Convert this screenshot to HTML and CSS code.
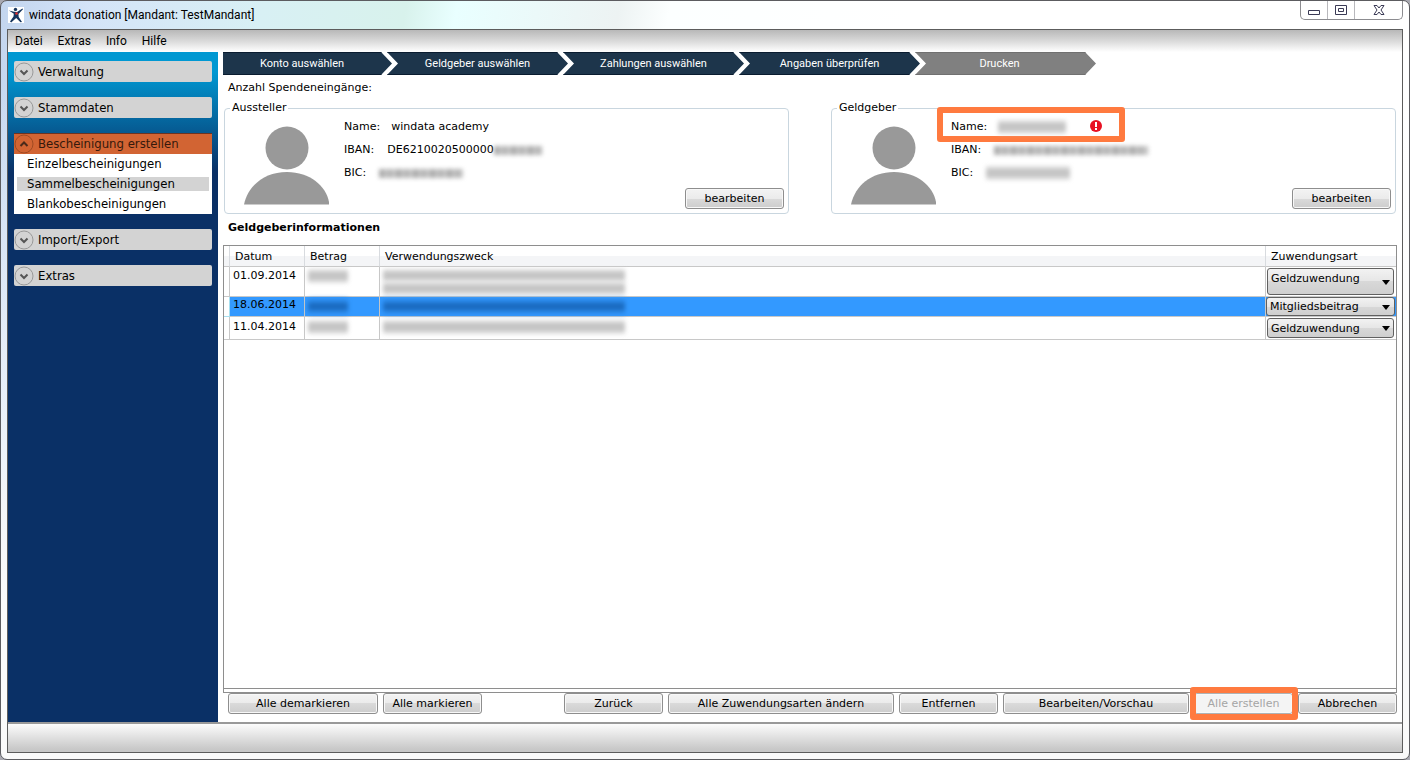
FILE: index.html
```html
<!DOCTYPE html>
<html lang="de">
<head>
<meta charset="utf-8">
<title>windata donation</title>
<link rel="stylesheet" href="styles.css">
</head>
<body>
<svg class="defs" aria-hidden="true">
  <symbol id="down" viewBox="0 0 20 20"><circle cx="10" cy="10" r="9" fill="none" stroke="#999"/><path d="M6.500 8.500 10 12l3.500-3.500" fill="none" stroke="#555" stroke-width="2"/></symbol>
  <symbol id="up" viewBox="0 0 20 20"><circle cx="10" cy="10" r="9" fill="none" stroke="#a04a22"/><path d="M6.500 12 10 8.500l3.500 3.500" fill="none" stroke="#4a2a1a" stroke-width="2"/></symbol>
  <symbol id="person" viewBox="0 0 86 79"><circle cx="43" cy="22" r="21.500" fill="#999"/><path d="M0 78.500C4 60 20 46 43 46s39 14 42 30v2.500z" fill="#999"/></symbol>
</svg>
<div class="window">
  <header class="titlebar">
    <svg class="logo" viewBox="0 0 16 16" aria-hidden="true"><path fill="#fff" d="M0 0h16v16H0z"/><circle cx="7.500" cy="2.400" r="1.700" fill="#16365f"/><path fill="#16365f" d="M1 3.500 6 4.700 9 5l5.500-3.500.5.800-4.500 4.700.2 3 3.300 5-1.500.3L8.200 11l-5 4.500L2 14.600l3.500-5.200.3-2.700z"/><circle cx="8.500" cy="6.500" r="1.300" fill="#e03030"/></svg>
    <h1>windata donation [Mandant: TestMandant]</h1>
    <div class="controls">
      <button aria-label="Minimieren"><svg viewBox="0 0 14 12"><path d="M1.500 6.500h11v4h-11z" fill="#fff" stroke="#3a3a55"/></svg></button>
      <button aria-label="Maximieren"><svg viewBox="0 0 14 12"><path d="M1.500 1.500h11v9h-11zM4.500 4.500h5v3h-5z" fill="#fff" stroke="#3a3a55"/></svg></button>
      <button class="close" aria-label="Schließen"><svg viewBox="0 0 14 12"><path d="M2 1.500h3L7 4l2-2.500h3L9 6l3 4.500H9L7 8l-2 2.500H2L5 6z" fill="#fff" stroke="#3a3a55"/></svg></button>
    </div>
  </header>
  <div class="client">
    <nav class="menu"><button>Datei</button><button>Extras</button><button>Info</button><button>Hilfe</button></nav>
    <div class="workspace">
      <nav class="sidebar">
        <button class="group"><svg><use href="#down"/></svg>Verwaltung</button>
        <button class="group"><svg><use href="#down"/></svg>Stammdaten</button>
        <section class="open">
          <button class="group active"><svg><use href="#up"/></svg>Bescheinigung erstellen</button>
          <ul>
            <li><a href="#einzel">Einzelbescheinigungen</a></li>
            <li><a href="#sammel" class="current">Sammelbescheinigungen</a></li>
            <li><a href="#blanko">Blankobescheinigungen</a></li>
          </ul>
        </section>
        <button class="group"><svg><use href="#down"/></svg>Import/Export</button>
        <button class="group"><svg><use href="#down"/></svg>Extras</button>
      </nav>
      <main>
        <ol class="steps">
          <li>Konto auswählen</li><li>Geldgeber auswählen</li><li>Zahlungen auswählen</li><li>Angaben überprüfen</li><li>Drucken</li>
        </ol>
        <p class="count">Anzahl Spendeneingänge:</p>
        <div class="parties">
          <fieldset>
            <legend>Aussteller</legend>
            <div class="party">
              <svg class="avatar" aria-hidden="true"><use href="#person"/></svg>
              <dl>
                <div><dt>Name:</dt><dd class="name">windata academy</dd></div>
                <div><dt>IBAN:</dt><dd>DE6210020500000<span class="blur w48"></span></dd></div>
                <div><dt>BIC:</dt><dd><span class="blur w84"></span></dd></div>
              </dl>
              <button class="btn">bearbeiten</button>
            </div>
          </fieldset>
          <fieldset>
            <legend>Geldgeber</legend>
            <div class="party">
              <svg class="avatar" aria-hidden="true"><use href="#person"/></svg>
              <dl>
                <div class="invalid"><dt>Name:</dt><dd class="name"><span class="blur tall w68"></span></dd><dd class="error"><svg viewBox="0 0 12 12" role="img" aria-label="Fehler"><circle cx="6" cy="6" r="6" fill="#e81123"/><path d="M5 2h2v5H5zM5 8h2v2H5z" fill="#fff"/></svg></dd></div>
                <div><dt>IBAN:</dt><dd><span class="blur w154"></span></dd></div>
                <div><dt>BIC:</dt><dd><span class="blur tall w84"></span></dd></div>
              </dl>
              <button class="btn">bearbeiten</button>
            </div>
          </fieldset>
        </div>
        <h2>Geldgeberinformationen</h2>
        <div class="grid">
          <table>
            <colgroup><col class="c-mark"><col class="c-date"><col class="c-date"><col><col class="c-kind"></colgroup>
            <thead><tr><th></th><th>Datum</th><th>Betrag</th><th>Verwendungszweck</th><th>Zuwendungsart</th></tr></thead>
            <tbody>
              <tr class="double"><td></td><td>01.09.2014</td><td><span class="blur tall w40"></span></td><td><span class="blur tall w240"></span><span class="blur tall w240"></span></td><td><select aria-label="Zuwendungsart 01.09.2014"><option>Geldzuwendung</option></select></td></tr>
              <tr class="selected"><td></td><td>18.06.2014</td><td><span class="blur tall w40"></span></td><td><span class="blur tall w240"></span></td><td><select aria-label="Zuwendungsart 18.06.2014"><option>Mitgliedsbeitrag</option></select></td></tr>
              <tr><td></td><td>11.04.2014</td><td><span class="blur tall w40"></span></td><td><span class="blur tall w240"></span></td><td><select aria-label="Zuwendungsart 11.04.2014"><option>Geldzuwendung</option></select></td></tr>
            </tbody>
          </table>
        </div>
        <div class="actions">
          <button class="btn wide">Alle demarkieren</button>
          <button class="btn">Alle markieren</button>
          <span class="spacer"></span>
          <button class="btn">Zurück</button>
          <button class="btn widest">Alle Zuwendungsarten ändern</button>
          <button class="btn">Entfernen</button>
          <button class="btn wider">Bearbeiten/Vorschau</button>
          <span class="marked"><button class="btn" disabled>Alle erstellen</button></span>
          <button class="btn">Abbrechen</button>
        </div>
      </main>
    </div>
    <footer></footer>
  </div>
</div>
</body>
</html>
```
FILE: styles.css
```css
*, ::before, ::after { box-sizing: border-box; }
body { margin: 0; background: #a8a8b0; font: 11px/14px "DejaVu Sans", Verdana, sans-serif; color: #000; }
button, select { font: inherit; color: inherit; margin: 0; }
h1, h2, p, ol, ul, dl, dd { margin: 0; padding: 0; }
ol, ul { list-style: none; }
.defs { position: absolute; width: 0; height: 0; }

.window {
  display: flex; flex-direction: column; min-height: 100vh; padding: 0 6px 6px;
  border: 1px solid #5c5c60; border-radius: 7px;
  background: linear-gradient(transparent 80px, #fafafa 600px), linear-gradient(100deg, #c3d5ee 0, #d4e4f8 90px, #d8f0f4 260px, #d8f2ec 400px, #e9ffff 450px, #edf3f3 610px, #fcffff 660px, #fff 900px);
}
.titlebar { display: flex; align-items: flex-start; height: 28px; padding-left: 1px; }
.logo { width: 16px; height: 16px; margin-top: 6px; }
h1 { flex: 1; padding: 5px 0 0 5px; font: 12px/18px Roboto, "Noto Sans", sans-serif; }
.controls { display: flex; border: 1px solid #8c8c90; border-top: 0; border-radius: 0 0 5px 5px; }
.controls button { display: flex; justify-content: center; align-items: center; width: 27px; height: 18px; padding: 0; border: 0; border-right: 1px solid #b8b8bc; background: none; }
.controls .close { width: 47px; border-right: 0; }
.controls svg { width: 14px; height: 12px; }

.client { flex: 1; display: flex; flex-direction: column; border: 1px solid #5c5c5c; background: #fff; }
.menu { display: flex; gap: 15px; height: 22px; padding-left: 7px; background: linear-gradient(#b8b8b8, #d6d6d6 45%, #fff); }
.menu button { padding: 0; border: 0; background: none; font: 12px/22px Roboto, "Noto Sans", sans-serif; }
.workspace { flex: 1; display: flex; }

.sidebar { flex: none; width: 210px; padding: 9px 6px; display: flex; flex-direction: column; gap: 15px; background: linear-gradient(#0098d2, #0098d2 20px, #0a3066 120px); font: 13px/20px "DejaVu Sans Condensed", Tahoma, "Noto Sans", sans-serif; }
.group { display: flex; align-items: center; gap: 4px; width: 100%; height: 21px; padding: 0; border: 0; border-radius: 2px; background: #d3d3d3; text-align: left; }
.group svg { width: 20px; height: 20px; }
.active { border-top: 1px solid #6b3322; border-radius: 0; background: #d26433; color: #35190c; }
.open ul { padding: 0 3px; background: #fff; }
.open li { height: 20px; padding: 3px 0; }
.open a { display: block; padding-left: 10px; line-height: 14px; color: #000; text-decoration: none; }
.open .current { background: #d3d3d3; }

main { flex: 1; min-width: 0; display: flex; flex-direction: column; padding: 0 5px 8px; }
.steps { display: flex; height: 23px; font: 11px/22px Roboto, "Noto Sans", sans-serif; color: #fff; text-align: center; }
.steps li { width: 181px; margin-left: -5px; background: #1d354b; border-top: 1px solid #0a1c30; border-bottom: 1px solid #0a1c30; clip-path: polygon(0 0, 170px 0, 100% 50%, 170px 100%, 0 100%, 11px 50%); }
.steps li:first-child { width: 169px; margin-left: 0; padding-right: 11px; clip-path: polygon(0 0, 158px 0, 100% 50%, 158px 100%, 0 100%); }
.steps li:last-child { padding-right: 12px; background: #808080; border-color: #707070; }
.count { padding: 5px 5px 4px; line-height: 16px; }

.parties { display: grid; grid-template-columns: 1fr 1fr; gap: 42px; margin: 0 1px; }
fieldset { min-width: 0; margin: 0; padding: 0; border: 1px solid #c9d6df; border-radius: 4px; }
legend { margin-left: 5px; padding: 0 2px; line-height: 16px; }
.party { display: flex; align-items: flex-start; padding: 0 4px 4px 19px; }
.avatar { flex: none; width: 86px; height: 79px; margin-top: 10px; }
dl { flex: 1; padding: 4px 0 0 14px; }
dl > div { position: relative; display: flex; height: 23px; line-height: 14px; }
dd { display: flex; margin-left: 13px; }
.name { margin-left: 11px; }
.party .btn { align-self: flex-end; margin-top: 72px; }
.invalid::before, .marked::after { content: ""; position: absolute; border: 6px solid #ff7a3f; border-radius: 3px; pointer-events: none; }
.invalid::before { left: -14px; top: -13px; width: 188px; height: 35px; }
dd.error { margin-left: 24px; }
.error svg { width: 12px; height: 12px; }

.blur { display: block; height: 9px; margin: 3px 0; background: repeating-linear-gradient(90deg, #888 0 5px, #aaa 5px 8px, #999 8px 14px, #b4b4b4 14px 17px); filter: blur(2px); opacity: .7; }
.tall { height: 14px; margin: 0; background: linear-gradient(#ddd, #aaa 35% 65%, #ddd); }
.w40 { width: 40px; } .w48 { width: 48px; } .w68 { width: 68px; } .w84 { width: 84px; } .w154 { width: 154px; } .w240 { width: 242px; }

h2 { padding: 6px 5px 9px; font: bold 11px/16px "DejaVu Sans", Verdana, sans-serif; }
.grid { flex: 1; border: 1px solid #8e8e8e; padding-bottom: 3px; display: flex; align-items: flex-start; background: linear-gradient(#8e8e8e, #8e8e8e) 0 calc(100% - 3px) / 100% 1px no-repeat; }
table { width: 100%; border-collapse: separate; border-spacing: 0; table-layout: fixed; }
.c-mark { width: 6px; } .c-date { width: 75px; } .c-kind { width: 130px; }
th { height: 21px; padding: 2px 5px 0; border-right: 1px solid #d8dbdf; border-bottom: 1px solid #c8c8c8; background: linear-gradient(#fff 50%, #f4f5f7 50%); font-weight: normal; text-align: left; }
td { height: 23px; padding: 3px 4px 0 3px; border-right: 1px solid #c8c8c8; border-bottom: 1px solid #c8c8c8; vertical-align: top; }
th:last-child, td:last-child { border-right: 0; }
.double td { height: 30px; padding-top: 2px; }
.selected td { height: 20px; padding-top: 1px; background: #3399ff; }
.double td:nth-child(4) .blur { height: 13px; }
.selected td:first-child { background: #fff; border-color: #a8e0f0; }
.selected .blur { height: 17px; background: linear-gradient(#3399ff, #0a4c96 50%, #3399ff); }
td:last-child, .double td:last-child { position: relative; padding: 1px; }
.selected td:last-child { padding: 0; }
td:last-child::after { content: ""; position: absolute; right: 6px; top: 50%; border: 4px solid transparent; border-top: 5px solid #000; border-bottom: 0; margin-top: -2px; pointer-events: none; }
select { display: block; width: 127px; height: 20px; padding: 1px 3px 0; border: 1px solid #606060; border-radius: 3px; appearance: none; background: linear-gradient(#f2f2f2, #e6e6e6 50%, #d8d8d8 50%, #cfcfcf); }
.double select { height: 27px; padding-bottom: 6px; }
.selected select { width: 129px; height: 19px; }

.actions { display: flex; gap: 5px; padding-left: 5px; }
.spacer { flex: 1; }
.btn { min-width: 99px; height: 21px; padding: 0 4px; border: 1px solid #8e8e8e; border-radius: 3px; background: linear-gradient(#f3f3f3, #ebebeb 50%, #dadada 50%, #cdcdcd); box-shadow: inset 0 0 0 1px #f8f8f8; line-height: 17px; white-space: nowrap; }
.btn:disabled { color: #a5a5a5; background: #f4f4f4; border-color: #adb2b5; }
.wide { width: 150px; } .wider { width: 186px; } .widest { width: 226px; }
.marked { position: relative; z-index: 1; }
.marked::after { left: -4px; top: -6px; right: -5px; bottom: -6px; }
footer { height: 30px; border-top: 2px solid #999; background: linear-gradient(#fcfcfc, #c8c8c8 90%); }
```
